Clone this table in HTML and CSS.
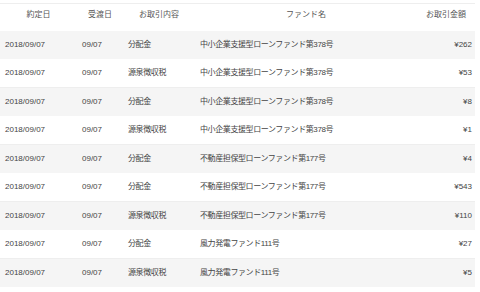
FILE: index.html
```html
<!DOCTYPE html>
<html lang="ja">
<head>
    <meta charset="UTF-8">
    <meta name="viewport" content="width=device-width, initial-scale=1.0">
    <title>お取引履歴</title>
    <link rel="stylesheet" href="styles.css">
</head>
<body>
    <table class="history">
        <colgroup>
            <col class="col-date">
            <col class="col-settle">
            <col class="col-type">
            <col class="col-fund">
            <col class="col-amount">
        </colgroup>
        <thead>
            <tr>
                <th>約定日</th>
                <th>受渡日</th>
                <th>お取引内容</th>
                <th>ファンド名</th>
                <th>お取引金額</th>
            </tr>
        </thead>
        <tbody>
            <tr><td>2018/09/07</td><td>09/07</td><td>分配金</td><td>中小企業支援型ローンファンド第378号</td><td class="amount">¥262</td></tr>
            <tr><td>2018/09/07</td><td>09/07</td><td>源泉徴収税</td><td>中小企業支援型ローンファンド第378号</td><td class="amount">¥53</td></tr>
            <tr><td>2018/09/07</td><td>09/07</td><td>分配金</td><td>中小企業支援型ローンファンド第378号</td><td class="amount">¥8</td></tr>
            <tr><td>2018/09/07</td><td>09/07</td><td>源泉徴収税</td><td>中小企業支援型ローンファンド第378号</td><td class="amount">¥1</td></tr>
            <tr><td>2018/09/07</td><td>09/07</td><td>分配金</td><td>不動産担保型ローンファンド第177号</td><td class="amount">¥4</td></tr>
            <tr><td>2018/09/07</td><td>09/07</td><td>分配金</td><td>不動産担保型ローンファンド第177号</td><td class="amount">¥543</td></tr>
            <tr><td>2018/09/07</td><td>09/07</td><td>源泉徴収税</td><td>不動産担保型ローンファンド第177号</td><td class="amount">¥110</td></tr>
            <tr><td>2018/09/07</td><td>09/07</td><td>分配金</td><td>風力発電ファンド111号</td><td class="amount">¥27</td></tr>
            <tr><td>2018/09/07</td><td>09/07</td><td>源泉徴収税</td><td>風力発電ファンド111号</td><td class="amount">¥5</td></tr>
        </tbody>
    </table>
</body>
</html>
```

FILE: styles.css
```css
* {
    margin: 0;
    padding: 0;
    box-sizing: border-box;
}

body {
    background: #ffffff;
    color: #444444;
    font-family: 'Liberation Sans', 'Noto Sans CJK JP', sans-serif;
    font-size: 8px;
    padding-top: 3px;
}

.history {
    width: 475px;
    border-collapse: collapse;
    table-layout: fixed;
    border-top: 1px solid #eeeeee;
}

.col-date { width: 77px; }
.col-settle { width: 46px; }
.col-type { width: 72px; }
.col-fund { width: 222px; }
.col-amount { width: 58px; }

.history th {
    height: 27px;
    padding-top: 4px;
    vertical-align: top;
    text-align: center;
    font-weight: normal;
    color: #555555;
    line-height: 14px;
}

.history td {
    height: 28px;
    padding-left: 5px;
    vertical-align: middle;
    line-height: 12px;
    white-space: nowrap;
}

/* 和文の列は少し詰める */
.history td:nth-child(3),
.history td:nth-child(4) {
    letter-spacing: -0.4px;
}

/* 奇数行はグレー、偶数行は下線つき */
.history tbody tr:nth-child(odd) {
    background: #f5f5f5;
}

.history tbody tr:nth-child(even) td {
    height: 29px;
    border-bottom: 1px solid #eeeeee;
}

.history td.amount {
    text-align: right;
    padding-left: 0;
    padding-right: 3px;
}
```
